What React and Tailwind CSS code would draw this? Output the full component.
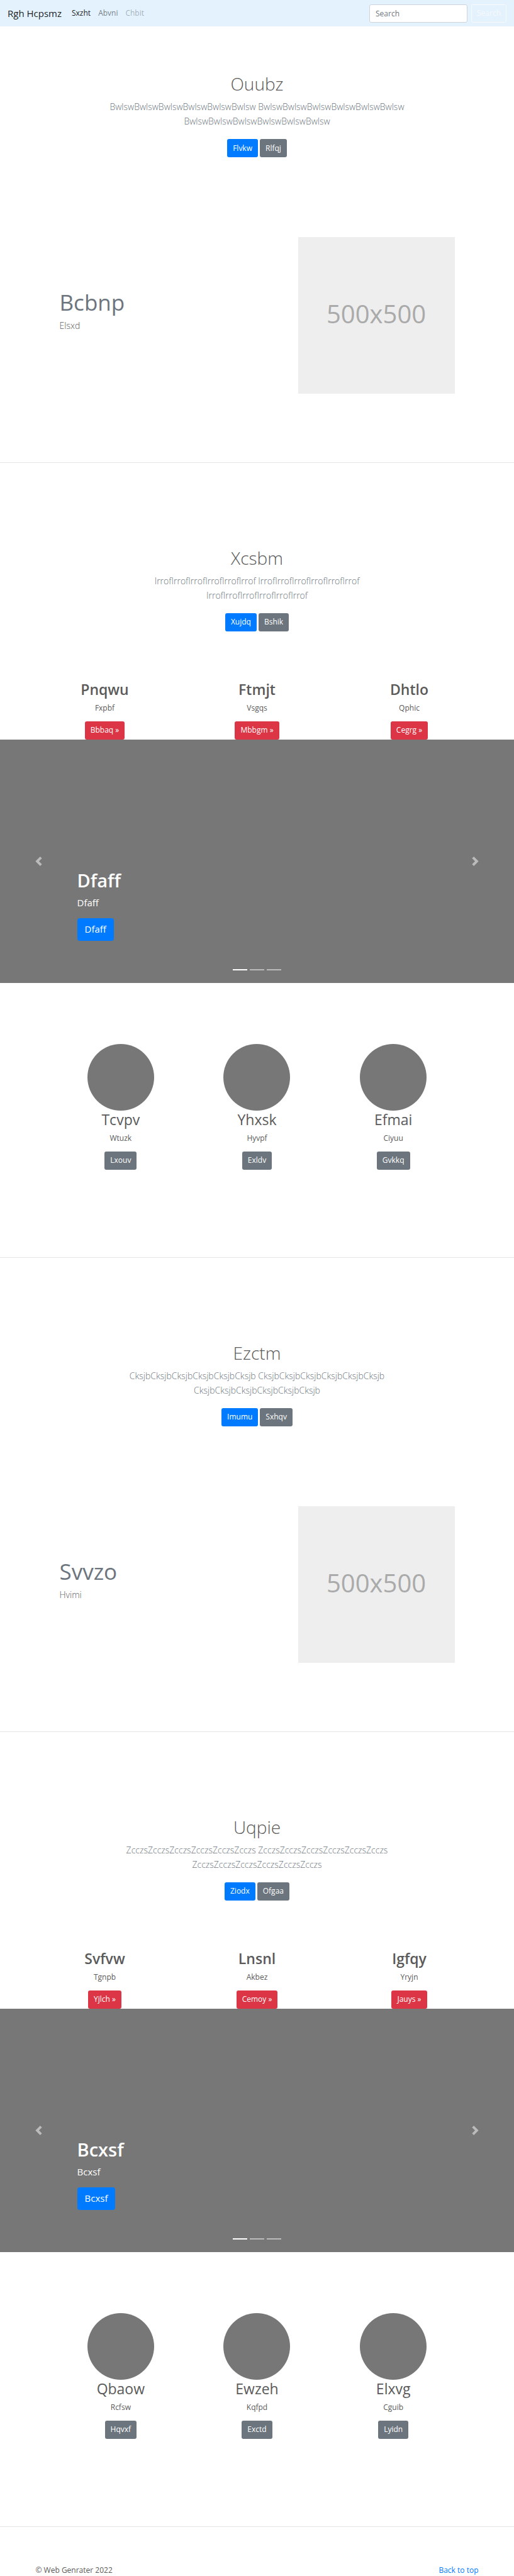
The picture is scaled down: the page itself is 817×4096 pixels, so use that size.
const groups = [
  {
    intro: { title: 'Ouubz', word: 'Bwlsw', primary: 'Flvkw', secondary: 'Rlfqj' },
    feature: { title: 'Bcbnp', text: 'Elsxd' },
    second: { title: 'Xcsbm', word: 'Irrof', primary: 'Xujdq', secondary: 'Bshik' },
    cards: [
      { title: 'Pnqwu', text: 'Fxpbf', action: 'Bbbaq »' },
      { title: 'Ftmjt', text: 'Vsgqs', action: 'Mbbgm »' },
      { title: 'Dhtlo', text: 'Qphic', action: 'Cegrg »' },
    ],
    slide: 'Dfaff',
    people: [
      { title: 'Tcvpv', text: 'Wtuzk', action: 'Lxouv' },
      { title: 'Yhxsk', text: 'Hyvpf', action: 'Exldv' },
      { title: 'Efmai', text: 'Ciyuu', action: 'Gvkkq' },
    ],
  },
  {
    intro: { title: 'Ezctm', word: 'Cksjb', primary: 'Imumu', secondary: 'Sxhqv' },
    feature: { title: 'Svvzo', text: 'Hvimi' },
    second: { title: 'Uqpie', word: 'Zcczs', primary: 'Ziodx', secondary: 'Ofgaa' },
    cards: [
      { title: 'Svfvw', text: 'Tgnpb', action: 'Yjlch »' },
      { title: 'Lnsnl', text: 'Akbez', action: 'Cemoy »' },
      { title: 'Igfqy', text: 'Yryjn', action: 'Jauys »' },
    ],
    slide: 'Bcxsf',
    people: [
      { title: 'Qbaow', text: 'Rcfsw', action: 'Hqvxf' },
      { title: 'Ewzeh', text: 'Kqfpd', action: 'Exctd' },
      { title: 'Elxvg', text: 'Cguib', action: 'Lyidn' },
    ],
  },
];

const tones = {
  primary: 'bg-[#007bff]',
  secondary: 'bg-[#6c757d]',
  danger: 'bg-[#dc3545]',
};

function Button({ tone, children }) {
  return (
    <a
      href="#"
      className={`inline-flex h-[29px] items-center rounded-[3px] px-[9px] text-[12px] leading-[18px] text-white ${tones[tone]}`}
    >
      {children}
    </a>
  );
}

function Divider() {
  return <hr className="border-0 border-t border-[#e5e5e5]" />;
}

function Navbar() {
  return (
    <nav className="flex h-[42px] items-center bg-[#e3f2fd] px-3">
      <a href="#" className="text-[15px] leading-[23px] text-black/90">Rgh Hcpsmz</a>
      <div className="ml-4 flex gap-3 text-[12px] leading-[18px]">
        <a href="#" className="text-black/90">Sxzht</a>
        <a href="#" className="text-black/50">Abvni</a>
        <a href="#" className="text-black/30">Chbit</a>
      </div>
      <form className="ml-auto flex gap-[6px]" onSubmit={(e) => e.preventDefault()}>
        <input
          type="search"
          aria-label="Search"
          placeholder="Search"
          className="h-[29px] w-[156px] rounded-[3px] border border-[#ced4da] bg-white px-[9px] text-[12px] placeholder:text-[#6c757d]"
        />
        <button
          type="submit"
          className="h-[29px] rounded-[3px] border border-[#f8f9fa] px-2 text-[12px] text-[#f8f9fa]"
        >
          Search
        </button>
      </form>
    </nav>
  );
}

function Hero({ title, word, primary, secondary, first }) {
  const run = word.repeat(6);
  return (
    <section className={`flex flex-col items-center text-center ${first ? 'pt-[73px]' : 'pt-[133px]'}`}>
      <h1 className="text-[28px] leading-[36px] font-light">{title}</h1>
      <p className="mt-[7px] max-w-[480px] text-[14px] leading-[23px] font-light text-[#6c757d]">
        {run} {run} {run}
      </p>
      <div className="mt-[17px] flex gap-[3px]">
        <Button tone="primary">{primary}</Button>
        <Button tone="secondary">{secondary}</Button>
      </div>
    </section>
  );
}

function Feature({ title, text }) {
  return (
    <section className="mx-auto mt-[127px] mb-[109px] grid max-w-[650px] grid-cols-12">
      <div className="col-span-7 px-[11px] pt-[85px]">
        <h2 className="text-[35px] leading-[38px] text-[#6c757d]">{title}</h2>
        <p className="mt-[6px] text-[14px] leading-[23px] font-light">{text}</p>
      </div>
      <div className="col-span-5 px-[11px]">
        <div className="flex aspect-square items-center justify-center bg-[#eeeeee] pb-1 text-[40px] text-[#aaaaaa]">
          500x500
        </div>
      </div>
    </section>
  );
}

function Cards({ items }) {
  return (
    <section className="mx-auto mt-[78px] grid max-w-[726px] grid-cols-3">
      {items.map((item) => (
        <div key={item.title} className="flex flex-col items-center">
          <h2 className="text-[23px] leading-[29px] font-semibold">{item.title}</h2>
          <p className="mt-[6px] mb-3 text-[12px] leading-[18px]">{item.text}</p>
          <Button tone="danger">{item.action}</Button>
        </div>
      ))}
    </section>
  );
}

function Chevron({ flip }) {
  return (
    <svg viewBox="0 0 8 8" className="size-[15px]" fill="#fff" aria-hidden="true">
      {flip ? (
        <path d="M2.75 0l-1.5 1.5L3.75 4l-2.5 2.5L2.75 8l4-4-4-4z" />
      ) : (
        <path d="M5.25 0l-4 4 4 4 1.5-1.5L4.25 4l2.5-2.5L5.25 0z" />
      )}
    </svg>
  );
}

function Carousel({ label }) {
  return (
    <section className="relative flex h-[387px] flex-col items-start justify-end bg-[#777777] px-[15%] pb-[67px] text-white">
      <h1 className="text-[29px] leading-[36px] font-semibold">{label}</h1>
      <p className="mt-[6px] text-[15px] leading-[23px]">{label}</p>
      <a
        href="#"
        className="mt-[13px] flex h-[36px] items-center rounded-[4px] bg-[#007bff] px-3 text-[15px] leading-[23px]"
      >
        {label}
      </a>
      <button type="button" aria-label="Previous" className="absolute inset-y-0 left-0 flex w-[15%] items-center justify-center opacity-50">
        <Chevron />
      </button>
      <button type="button" aria-label="Next" className="absolute inset-y-0 right-0 flex w-[15%] items-center justify-center opacity-50">
        <Chevron flip />
      </button>
      <div className="absolute inset-x-0 bottom-5 flex justify-center gap-1">
        <span className="h-[2px] w-[23px] bg-white" />
        <span className="h-[2px] w-[23px] bg-white/50" />
        <span className="h-[2px] w-[23px] bg-white/50" />
      </div>
    </section>
  );
}

function People({ items }) {
  return (
    <section className="mx-auto mt-[97px] mb-[139px] grid max-w-[650px] grid-cols-3">
      {items.map((item) => (
        <div key={item.title} className="flex flex-col items-center">
          <div className="size-[106px] rounded-full bg-[#777777]" />
          <h2 className="text-[23px] leading-[29px]">{item.title}</h2>
          <p className="mt-[6px] mb-3 text-[12px] leading-[18px]">{item.text}</p>
          <Button tone="secondary">{item.action}</Button>
        </div>
      ))}
    </section>
  );
}

export default function App() {
  return (
    <div className="bg-white font-['Open_Sans','Noto_Sans',sans-serif] text-[#5a5a5a]">
      <Navbar />
      <main>
        {groups.map((group, index) => (
          <div key={group.slide}>
            <Hero {...group.intro} first={index === 0} />
            <Feature {...group.feature} />
            <Divider />
            <Hero {...group.second} />
            <Cards items={group.cards} />
            <Carousel label={group.slide} />
            <People items={group.people} />
            <Divider />
          </div>
        ))}
      </main>
      <footer className="mx-auto mt-[60px] flex max-w-[726px] justify-between px-[11px] text-[12px] leading-[18px]">
        <p>© Web Genrater 2022</p>
        <a href="#" className="text-[#007bff]">Back to top</a>
      </footer>
    </div>
  );
}
